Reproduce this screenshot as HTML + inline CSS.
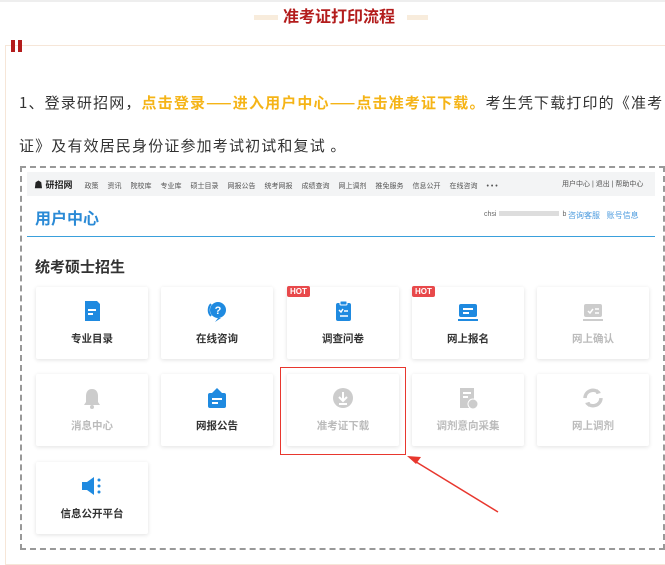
<!DOCTYPE html>
<html><head><meta charset="utf-8"><style>
*{margin:0;padding:0;box-sizing:border-box}
body{width:665px;height:552px;background:#fff;font-family:"Liberation Sans","Noto Sans CJK SC",sans-serif;position:relative;overflow:hidden}
.abs{position:absolute}
.card{position:absolute;width:112px;height:72px;background:#fff;box-shadow:0 1px 4px rgba(0,0,0,.12);border-radius:2px}
.card .lb{position:absolute;left:0;right:0;top:44px;text-align:center;font-size:10.5px;font-weight:bold;color:#333}
.card.g .lb{color:#bbb}
.card svg{position:absolute;left:44px;top:12px}
.hot{position:absolute;left:0;top:-1px;background:#e8494b;color:#fff;font-size:8px;font-weight:bold;padding:1px 3px;border-radius:2px}
.nav span{margin-right:9px}
.cj{font-family:"Noto Sans CJK SC",sans-serif}
</style></head><body>
<div class="abs" style="left:0;top:0;width:665px;height:2px;background:#eee"></div>
<div class="abs" style="left:254px;top:15px;width:24px;height:5px;background:#f8ecdc"></div>
<div class="abs" style="left:407px;top:15px;width:21px;height:5px;background:#f8ecdc"></div>
<div class="abs cj" style="left:283px;top:3px;font-size:16px;font-weight:bold;color:#b31c1c;line-height:24px">准考证打印流程</div>
<div class="abs" style="left:5px;top:45px;width:665px;height:520px;border:1px solid #f6e6d8"></div>
<div class="abs" style="left:11px;top:40px;width:4px;height:12px;background:#b31c1c"></div>
<div class="abs" style="left:18px;top:40px;width:4px;height:12px;background:#b31c1c"></div>
<div class="abs cj" style="left:19px;top:92px;font-size:15px;letter-spacing:1.15px;color:#333;white-space:nowrap">1、登录研招网，<b style="color:#f5b417">点击登录——进入用户中心——点击准考证下载。</b>考生凭下载打印的《准考</div>
<div class="abs cj" style="left:19px;top:135px;font-size:15px;letter-spacing:1.15px;color:#333">证》及有效居民身份证参加考试初试和复试 。</div>
<div class="abs" style="left:20px;top:166px;width:645px;height:384px;border:2px dashed #999"></div>
<div class="abs" style="left:27px;top:172px;width:628px;height:24px;background:#f3f4f5"></div>
<div class="abs nav" style="left:34px;top:178px;font-size:7px;color:#555;white-space:nowrap"><b style="font-size:9px;color:#222;margin-right:12px">☗ 研招网</b><span>政策</span><span>资讯</span><span>院校库</span><span>专业库</span><span>硕士目录</span><span>网报公告</span><span>统考网报</span><span>成绩查询</span><span>网上调剂</span><span>推免服务</span><span>信息公开</span><span>在线咨询</span><span>• • •</span></div>
<div class="abs" style="left:562px;top:179px;font-size:7px;color:#555">用户中心 | 退出 | 帮助中心</div>
<div class="abs" style="left:35px;top:205px;font-size:16px;font-weight:bold;color:#2a8ad6">用户中心</div>
<div class="abs" style="left:484px;top:211px;font-size:7px;color:#666">chsi<span style="display:inline-block;width:60px;height:5px;background:#ddd;margin:0 3px"></span>b</div>
<div class="abs" style="left:568px;top:210px;font-size:8px;color:#4a9ade">咨询客服 &nbsp; 账号信息</div>
<div class="abs" style="left:27px;top:236px;width:628px;height:1px;background:#3aa0dc"></div>
<div class="abs" style="left:35px;top:256px;font-size:15px;font-weight:bold;color:#333">统考硕士招生</div>

<div class="card" style="left:36px;top:287px"><svg width="24" height="24"><path d="M5 2h12l3 3v17H5z" fill="#1f8ae0"/><rect x="8" y="10" width="8" height="2" fill="#fff"/><rect x="8" y="14" width="5" height="2" fill="#fff"/></svg><div class="lb">专业目录</div></div>
<div class="card" style="left:161px;top:287px"><svg width="24" height="24"><circle cx="13" cy="11" r="8" fill="#1f8ae0"/><path d="M13 19l-3 4 6-4z" fill="#1f8ae0"/><path d="M6 5a9 9 0 0 0 0 12" stroke="#1f8ae0" stroke-width="2" fill="none"/><text x="13" y="15" font-size="11" font-weight="bold" fill="#fff" text-anchor="middle" font-family="Liberation Sans">?</text></svg><div class="lb">在线咨询</div></div>
<div class="card" style="left:287px;top:287px"><span class="hot">HOT</span><svg width="24" height="24"><rect x="5" y="4" width="15" height="18" rx="2" fill="#1f8ae0"/><rect x="9" y="2" width="7" height="4" rx="1" fill="#1f8ae0" stroke="#fff"/><path d="M8 11l2 2 2-3M13 12h4M9 17h8" stroke="#fff" stroke-width="1.5" fill="none"/></svg><div class="lb">调查问卷</div></div>
<div class="card" style="left:412px;top:287px"><span class="hot">HOT</span><svg width="24" height="24"><rect x="3" y="5" width="18" height="13" rx="2" fill="#1f8ae0"/><rect x="2" y="20" width="20" height="2" fill="#1f8ae0"/><rect x="7" y="9" width="10" height="2" fill="#fff"/><rect x="7" y="13" width="6" height="2" fill="#fff"/></svg><div class="lb">网上报名</div></div>
<div class="card g" style="left:537px;top:287px"><svg width="24" height="24"><rect x="3" y="5" width="18" height="13" rx="2" fill="#ccc"/><rect x="2" y="20" width="20" height="2" fill="#ccc"/><path d="M7 12l2 2 3-4M14 10h4M14 14h4" stroke="#fff" stroke-width="1.5" fill="none"/></svg><div class="lb">网上确认</div></div>

<div class="card g" style="left:36px;top:374px"><svg width="24" height="24"><path d="M12 3c-4 0-6 3-6 7v6l-2 3h16l-2-3v-6c0-4-2-7-6-7z" fill="#ccc"/><circle cx="12" cy="21" r="2" fill="#ccc"/></svg><div class="lb">消息中心</div></div>
<div class="card" style="left:161px;top:374px"><svg width="24" height="24"><path d="M12 2l5 5H7z" fill="#1f8ae0"/><rect x="3" y="7" width="18" height="15" rx="2" fill="#1f8ae0"/><rect x="7" y="12" width="10" height="2" fill="#fff"/><rect x="7" y="16" width="6" height="2" fill="#fff"/></svg><div class="lb">网报公告</div></div>
<div class="card g" style="left:287px;top:374px"><svg width="24" height="24"><circle cx="12" cy="12" r="10" fill="#ccc"/><path d="M12 6v8M8 11l4 4 4-4M8 18h8" stroke="#fff" stroke-width="2" fill="none"/></svg><div class="lb">准考证下载</div></div>
<div class="card g" style="left:412px;top:374px"><svg width="24" height="24"><path d="M4 2h14v20H4z" fill="#ccc"/><rect x="7" y="6" width="8" height="2" fill="#fff"/><rect x="7" y="10" width="5" height="2" fill="#fff"/><circle cx="17" cy="18" r="5" fill="#ccc" stroke="#fff"/></svg><div class="lb">调剂意向采集</div></div>
<div class="card g" style="left:537px;top:374px"><svg width="24" height="24"><path d="M4 12a8 8 0 0 1 14-5M20 12a8 8 0 0 1-14 5" stroke="#ccc" stroke-width="3.5" fill="none"/><path d="M16 3l4 4-5 1z M8 21l-4-4 5-1z" fill="#ccc"/></svg><div class="lb">网上调剂</div></div>

<div class="card" style="left:36px;top:462px"><svg width="24" height="24"><path d="M2 8h5l7-5v18l-7-5H2z" fill="#1f8ae0"/><circle cx="19" cy="6" r="1.5" fill="#1f8ae0"/><circle cx="19" cy="12" r="1.5" fill="#1f8ae0"/><circle cx="19" cy="18" r="1.5" fill="#1f8ae0"/></svg><div class="lb">信息公开平台</div></div>

<div class="abs" style="left:280px;top:367px;width:126px;height:88px;border:1.5px solid #e8372e"></div>
<svg class="abs" style="left:0;top:0" width="665" height="552"><line x1="498" y1="512" x2="413" y2="460" stroke="#e8372e" stroke-width="1.5"/><path d="M407 456l14 1-5 7z" fill="#e8372e"/></svg>
</body></html>
